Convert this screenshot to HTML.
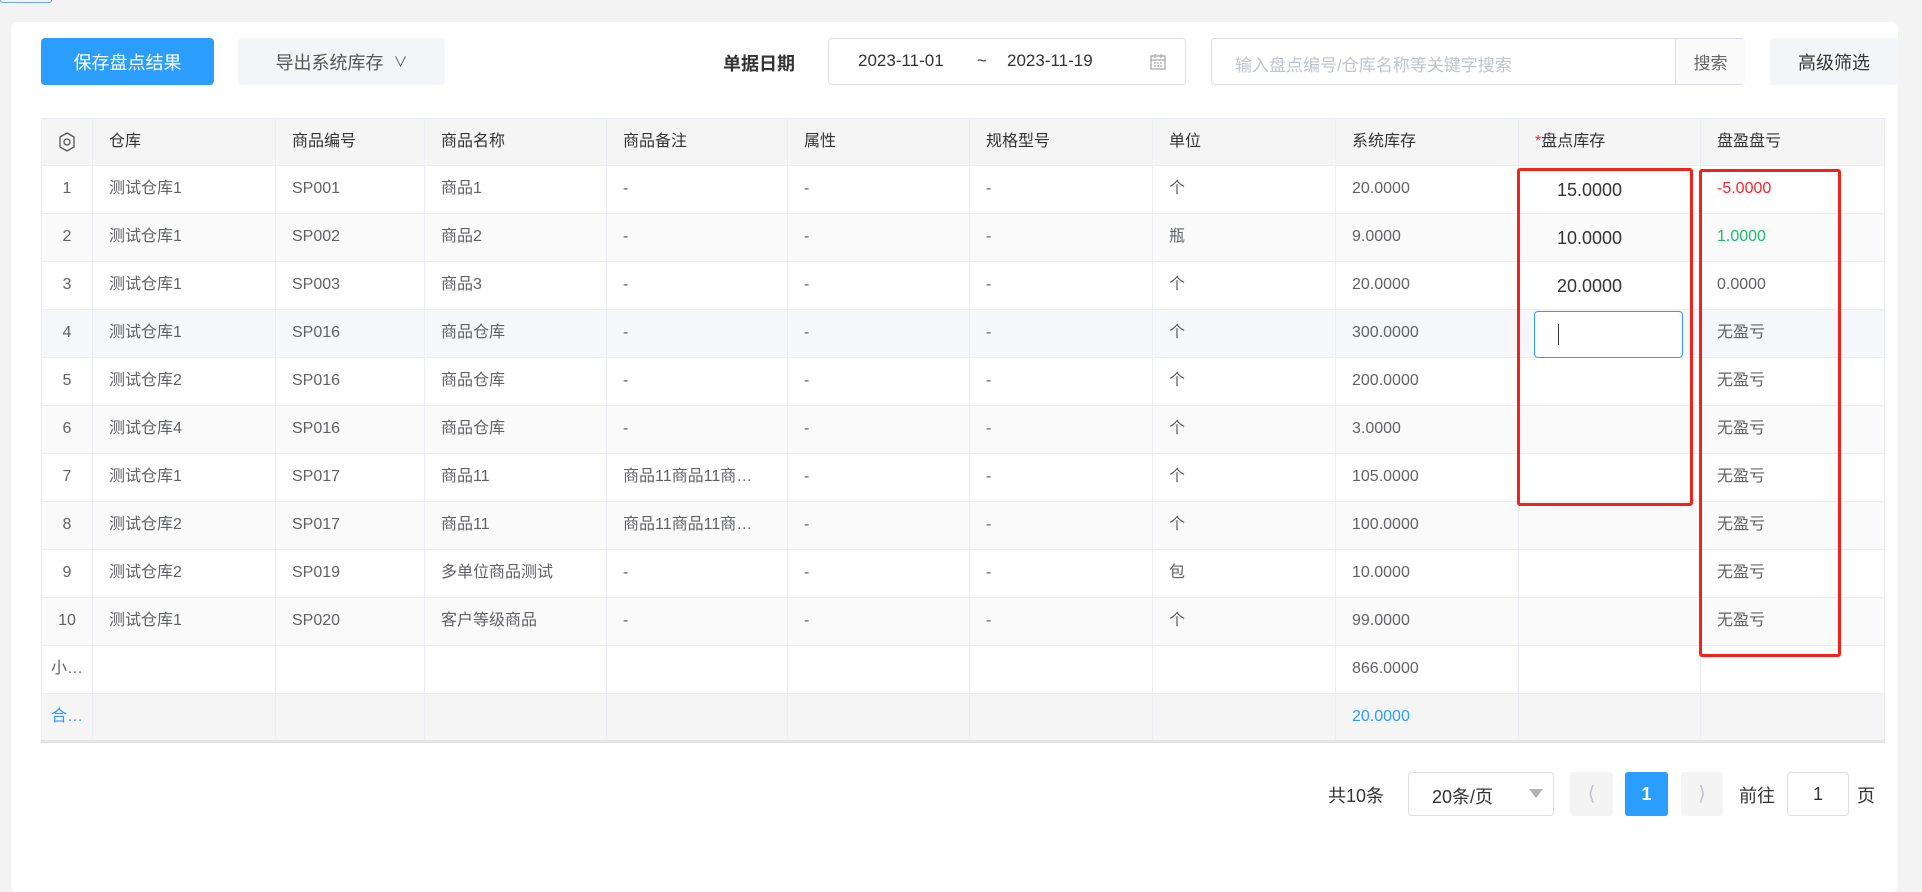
<!DOCTYPE html>
<html><head><meta charset="utf-8"><style>
*{box-sizing:border-box;margin:0;padding:0}
body{width:1922px;height:875px;background:#f3f3f3;font-family:"Liberation Sans","Noto Sans CJK SC",sans-serif;position:relative;overflow:hidden;color:#606266}
.card{position:absolute;left:11px;top:22px;width:1887px;height:870px;background:#fff;border-radius:6px}
.a{position:absolute}
.btn{position:absolute;top:38px;height:47px;border-radius:4px;font-size:18px;display:flex;align-items:center;justify-content:center}
table{position:absolute;left:41px;top:118px;border-collapse:collapse;table-layout:fixed;font-size:16px}
td,th{border:1px solid #ebeef5;height:48px;padding:0 0 0 16px;text-align:left;white-space:nowrap;overflow:hidden;font-weight:normal;line-height:22px;vertical-align:middle}
td span,th span{display:inline-block;vertical-align:middle;line-height:22px}
th{background:#f5f5f5;color:#333;height:47px}
tr.s td{background:#fafafa}
tr.h td{background:#f5f7fa}
tr.t td{background:#f5f5f5;border-bottom:3px solid #e4e4e4}
td.n,th.n{padding:0;text-align:center}
.big{font-size:18px;color:#333;padding-left:38px}
.red{color:#f5222d}.grn{color:#19be6b}.blu{color:#2a9dfd}
.box{position:absolute;border:3px solid #f5221a;border-radius:3px}
</style></head><body>
<div class="a" style="left:0;top:0;width:52px;height:3px;border:1px solid #6aa6e8;border-top:none;border-radius:0 0 4px 4px"></div>
<div class="card"></div>
<div class="btn" style="left:41px;width:173px;background:#2a9dfd;color:#fff">保存盘点结果</div>
<div class="btn" style="left:238px;width:207px;background:#f4f5f8;color:#555">导出系统库存&nbsp;&nbsp;<span style="font-size:14px">&#8744;</span></div>
<div class="a" style="left:723px;top:50px;font-size:18px;font-weight:bold;color:#333">单据日期</div>
<div class="a" style="left:828px;top:38px;width:358px;height:47px;border:1px solid #dcdfe6;border-radius:4px;font-size:17px;color:#333">
<span class="a" style="left:29px;top:12px">2023-11-01</span><span class="a" style="left:148px;top:12px">~</span><span class="a" style="left:178px;top:12px">2023-11-19</span>
<svg class="a" style="left:320px;top:14px" width="18" height="18" viewBox="0 0 18 18" fill="none" stroke="#aaa" stroke-width="1.3"><rect x="2" y="3" width="14" height="13"/><path d="M2 7h14M6 1v4M12 1v4M5 10h2M8 10h2M11 10h2M5 13h2M8 13h2M11 13h2"/></svg></div>
<div class="a" style="left:1211px;top:38px;width:534px;height:47px;border:1px solid #dcdfe6;border-radius:4px;font-size:17px">
<span class="a" style="left:23px;top:12px;color:#c0c4cc">输入盘点编号/仓库名称等关键字搜索</span>
<div class="a" style="left:463px;top:0;width:70px;height:45px;border-left:1px solid #dcdfe6;background:#fafafa;display:flex;align-items:center;justify-content:center;color:#666">搜索</div></div>
<div class="btn" style="left:1770px;width:128px;background:#f4f5f8;color:#333">高级筛选</div>
<table>
<colgroup><col style="width:51px"><col style="width:183px"><col style="width:149px"><col style="width:182px"><col style="width:181px"><col style="width:182px"><col style="width:183px"><col style="width:183px"><col style="width:183px"><col style="width:182px"><col style="width:184px"></colgroup>
<tr><th class="n"><svg width="18" height="20" viewBox="0 0 18 20" fill="none" stroke="#555" stroke-width="1.3" style="vertical-align:middle"><path d="M9 1l7 4v10l-7 4-7-4V5z"/><circle cx="9" cy="10" r="3"/></svg></th><th><span>仓库</span></th><th><span>商品编号</span></th><th><span>商品名称</span></th><th><span>商品备注</span></th><th><span>属性</span></th><th><span>规格型号</span></th><th><span>单位</span></th><th><span>系统库存</span></th><th><span><span style="color:#f5222d">*</span>盘点库存</span></th><th><span>盘盈盘亏</span></th></tr>
<tr><td class="n"><span>1</span></td><td><span>测试仓库1</span></td><td><span>SP001</span></td><td><span>商品1</span></td><td><span>-</span></td><td><span>-</span></td><td><span>-</span></td><td><span>个</span></td><td><span>20.0000</span></td><td class="big"><span>15.0000</span></td><td class="red"><span>-5.0000</span></td></tr>
<tr class="s"><td class="n"><span>2</span></td><td><span>测试仓库1</span></td><td><span>SP002</span></td><td><span>商品2</span></td><td><span>-</span></td><td><span>-</span></td><td><span>-</span></td><td><span>瓶</span></td><td><span>9.0000</span></td><td class="big"><span>10.0000</span></td><td class="grn"><span>1.0000</span></td></tr>
<tr><td class="n"><span>3</span></td><td><span>测试仓库1</span></td><td><span>SP003</span></td><td><span>商品3</span></td><td><span>-</span></td><td><span>-</span></td><td><span>-</span></td><td><span>个</span></td><td><span>20.0000</span></td><td class="big"><span>20.0000</span></td><td><span>0.0000</span></td></tr>
<tr class="h"><td class="n"><span>4</span></td><td><span>测试仓库1</span></td><td><span>SP016</span></td><td><span>商品仓库</span></td><td><span>-</span></td><td><span>-</span></td><td><span>-</span></td><td><span>个</span></td><td><span>300.0000</span></td><td></td><td><span>无盈亏</span></td></tr>
<tr><td class="n"><span>5</span></td><td><span>测试仓库2</span></td><td><span>SP016</span></td><td><span>商品仓库</span></td><td><span>-</span></td><td><span>-</span></td><td><span>-</span></td><td><span>个</span></td><td><span>200.0000</span></td><td></td><td><span>无盈亏</span></td></tr>
<tr class="s"><td class="n"><span>6</span></td><td><span>测试仓库4</span></td><td><span>SP016</span></td><td><span>商品仓库</span></td><td><span>-</span></td><td><span>-</span></td><td><span>-</span></td><td><span>个</span></td><td><span>3.0000</span></td><td></td><td><span>无盈亏</span></td></tr>
<tr><td class="n"><span>7</span></td><td><span>测试仓库1</span></td><td><span>SP017</span></td><td><span>商品11</span></td><td><span>商品11商品11商…</span></td><td><span>-</span></td><td><span>-</span></td><td><span>个</span></td><td><span>105.0000</span></td><td></td><td><span>无盈亏</span></td></tr>
<tr class="s"><td class="n"><span>8</span></td><td><span>测试仓库2</span></td><td><span>SP017</span></td><td><span>商品11</span></td><td><span>商品11商品11商…</span></td><td><span>-</span></td><td><span>-</span></td><td><span>个</span></td><td><span>100.0000</span></td><td></td><td><span>无盈亏</span></td></tr>
<tr><td class="n"><span>9</span></td><td><span>测试仓库2</span></td><td><span>SP019</span></td><td><span>多单位商品测试</span></td><td><span>-</span></td><td><span>-</span></td><td><span>-</span></td><td><span>包</span></td><td><span>10.0000</span></td><td></td><td><span>无盈亏</span></td></tr>
<tr class="s"><td class="n"><span>10</span></td><td><span>测试仓库1</span></td><td><span>SP020</span></td><td><span>客户等级商品</span></td><td><span>-</span></td><td><span>-</span></td><td><span>-</span></td><td><span>个</span></td><td><span>99.0000</span></td><td></td><td><span>无盈亏</span></td></tr>
<tr><td class="n"><span>小…</span></td><td></td><td></td><td></td><td></td><td></td><td></td><td></td><td><span>866.0000</span></td><td></td><td></td></tr>
<tr class="t"><td class="n blu"><span>合…</span></td><td></td><td></td><td></td><td></td><td></td><td></td><td></td><td class="blu"><span>20.0000</span></td><td></td><td></td></tr>
</table>
<div class="a" style="left:1534px;top:311px;width:149px;height:47px;border:1px solid #2a9dfd;border-radius:4px;background:#fff"><div class="a" style="left:23px;top:12px;width:1px;height:21px;background:#333"></div></div>
<div class="box" style="left:1517px;top:168px;width:176px;height:338px"></div>
<div class="box" style="left:1699px;top:169px;width:142px;height:488px"></div>
<div class="a" style="left:1328px;top:782px;font-size:18px;color:#333">共10条</div>
<div class="a" style="left:1408px;top:772px;width:146px;height:44px;border:1px solid #dcdfe6;border-radius:4px;font-size:18px;color:#333"><span class="a" style="left:23px;top:10px">20条/页</span><span class="a" style="left:120px;top:16px;width:0;height:0;border:7px solid transparent;border-top:9px solid #b0b3b8"></span></div>
<div class="a" style="left:1570px;top:772px;width:43px;height:44px;background:#f4f4f5;border-radius:3px;color:#c0c4cc;font-size:20px;text-align:center;line-height:44px">&#10216;</div>
<div class="a" style="left:1625px;top:772px;width:43px;height:44px;background:#2a9dfd;border-radius:3px;color:#fff;font-size:18px;font-weight:bold;text-align:center;line-height:44px">1</div>
<div class="a" style="left:1681px;top:772px;width:42px;height:44px;background:#f4f4f5;border-radius:3px;color:#c0c4cc;font-size:20px;text-align:center;line-height:44px">&#10217;</div>
<div class="a" style="left:1739px;top:782px;font-size:18px;color:#333">前往</div>
<div class="a" style="left:1787px;top:772px;width:62px;height:44px;border:1px solid #dcdfe6;border-radius:4px;font-size:18px;color:#333;text-align:center;line-height:42px">1</div>
<div class="a" style="left:1857px;top:782px;font-size:18px;color:#333">页</div>
</body></html>
